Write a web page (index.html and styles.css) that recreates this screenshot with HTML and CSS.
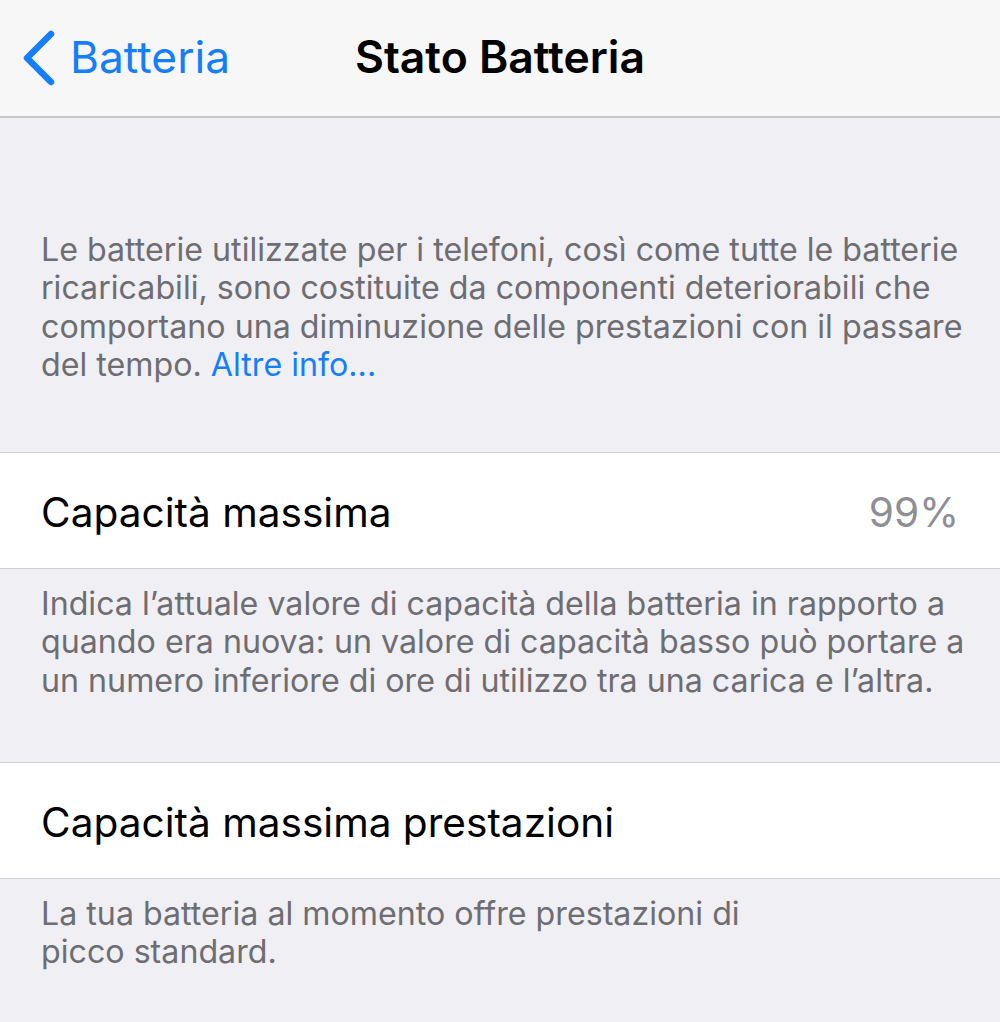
FILE: index.html
```html
<!DOCTYPE html>
<html lang="it">
<head>
  <meta charset="UTF-8" />
  <title>Stato Batteria</title>
  <meta name="viewport" content="width=device-width, initial-scale=1.0"/>
  <link rel="stylesheet" href="styles.css">
</head>
<body>

  <!-- Nav bar -->
  <div class="nav-bar">
    <a class="nav-back" href="#">
      <svg class="chevron" width="40" height="60" viewBox="0 0 40 60">
        <path d="M32 6 L8 30 L32 54" fill="none" stroke="#157efb" stroke-width="6.5" stroke-linecap="round" stroke-linejoin="round"/>
      </svg>
      <span>Batteria</span>
    </a>
    <div class="nav-title">Stato Batteria</div>
  </div>

  <!-- Intro -->
  <div class="footer-text intro">
    Le batterie utilizzate per i telefoni, così come tutte le batterie<br>
    ricaricabili, sono costituite da componenti deteriorabili che<br>
    comportano una diminuzione delle prestazioni con il passare<br>
    del tempo. <a href="#">Altre info...</a>
  </div>

  <div class="cell">
    <span class="cell-label">Capacità massima</span>
    <span class="cell-value">99%</span>
  </div>
  <div class="footer-text">
    Indica l’attuale valore di capacità della batteria in rapporto a<br>
    quando era nuova: un valore di capacità basso può portare a<br>
    un numero inferiore di ore di utilizzo tra una carica e l’altra.
  </div>

  <div class="cell">
    <span class="cell-label">Capacità massima prestazioni</span>
  </div>
  <div class="footer-text">
    La tua batteria al momento offre prestazioni di<br>
    picco standard.
  </div>

</body>
</html>
```

FILE: styles.css
```css
* {
  box-sizing: border-box;
}

body {
  margin: 0;
  font-family: Inter, 'Liberation Sans', sans-serif;
  background-color: #efeff4;
  color: #000;
  width: 1000px;
  min-height: 1022px;
  overflow: hidden;
}

/* NAV BAR */
.nav-bar {
  height: 118px;
  background-color: #f7f7f8;
  border-bottom: 2px solid #c7c7cc;
  display: flex;
  align-items: center;
  position: relative;
  padding-bottom: 2px;
}

.nav-back {
  display: flex;
  align-items: center;
  color: #157efb;
  text-decoration: none;
  font-size: 44.3px;
  padding-left: 19px;
}

.nav-back .chevron {
  margin-right: 11px;
  margin-top: 2px;
}

.nav-title {
  position: absolute;
  left: 0;
  right: 0;
  text-align: center;
  font-size: 44.5px;
  font-weight: 600;
  pointer-events: none;
}

/* FOOTERS */
.footer-text {
  padding: 16px 20px 62px 41px;
  font-size: 32.2px;
  line-height: 38.3px;
  color: #6d6d72;
  white-space: nowrap;
}

.footer-text.intro {
  padding-top: 113px;
  padding-bottom: 68px;
}

.footer-text a {
  color: #157efb;
  text-decoration: none;
}

/* CELLS */
.cell {
  height: 117px;
  background-color: #fff;
  border-top: 1px solid #cfcfd3;
  border-bottom: 1px solid #cfcfd3;
  display: flex;
  align-items: center;
  justify-content: space-between;
  padding: 4px 41px 0;
  font-size: 40.6px;
}

.cell-value {
  color: #8e8e93;
}
```
